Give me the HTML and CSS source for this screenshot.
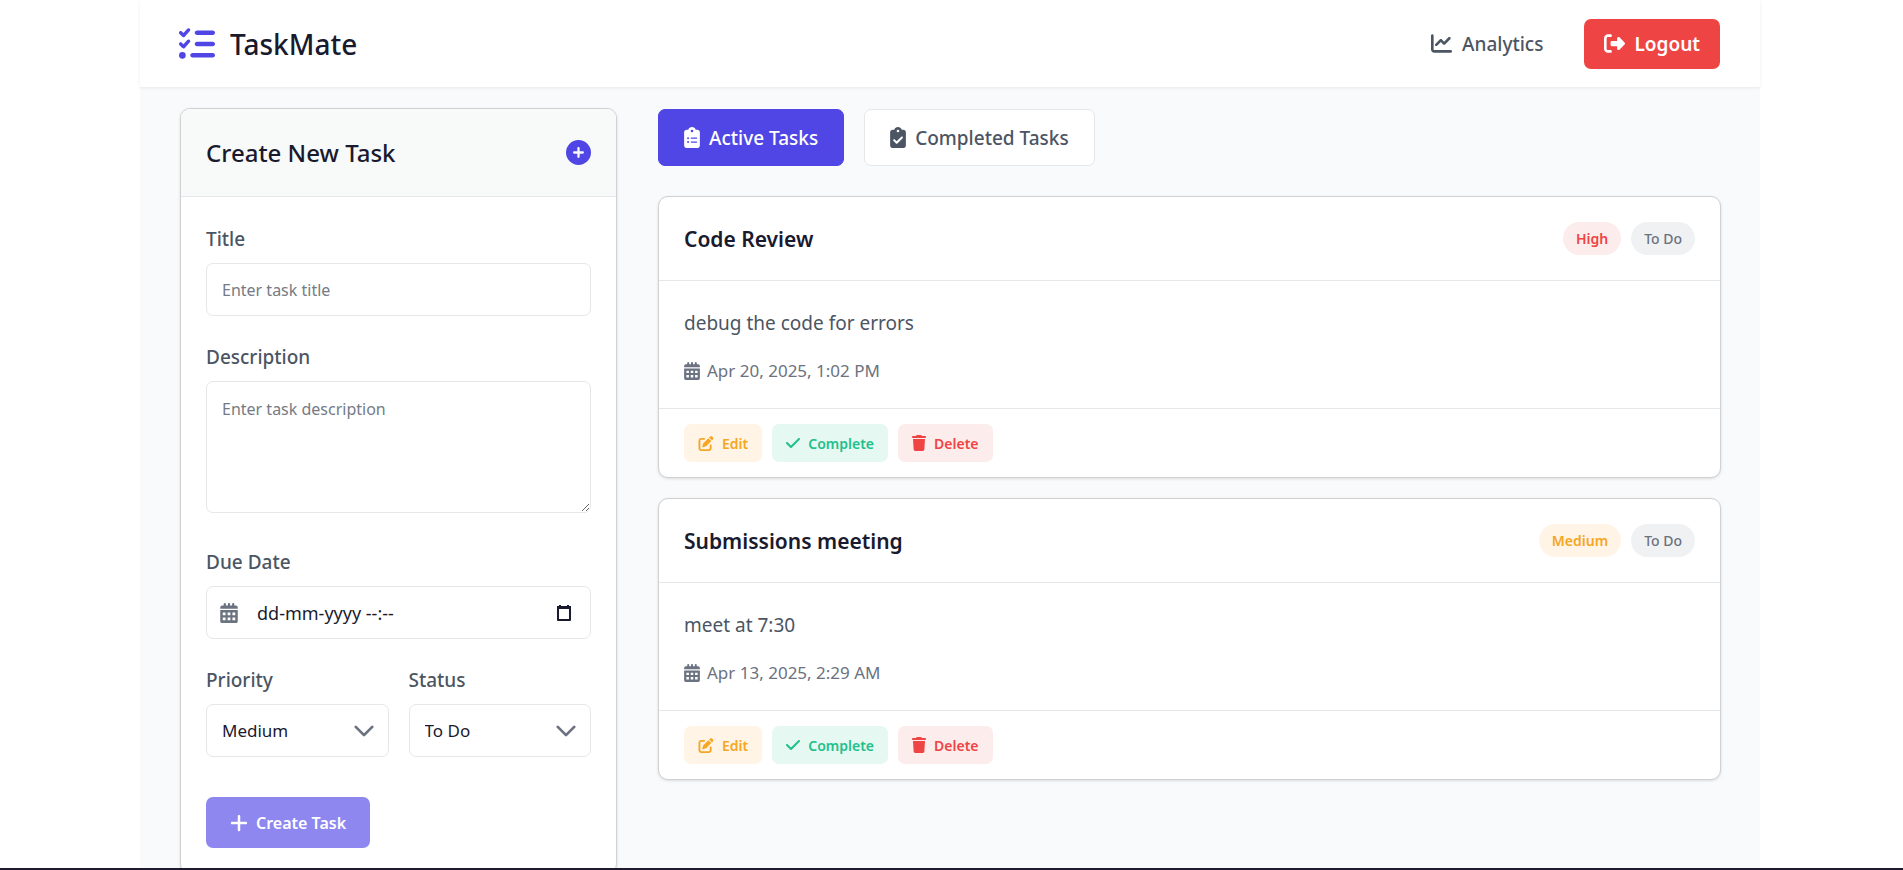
FILE: index.html
```html
<!DOCTYPE html>
<html lang="en">
<head>
<meta charset="utf-8">
<title>TaskMate</title>
<link rel="stylesheet" href="styles.css">
</head>
<body>
<svg class="sprite" aria-hidden="true">
  <symbol id="i-list" viewBox="0 0 512 512"><path d="M152.1 38.2c9.9 8.9 10.7 24 1.8 33.9l-72 80c-4.4 4.9-10.6 7.8-17.2 7.9s-12.9-2.4-17.6-7L7 113C-2.3 103.6-2.3 88.4 7 79s24.6-9.4 33.9 0l22.1 22.1 55.1-61.2c8.9-9.9 24-10.7 33.9-1.8zm0 160c9.9 8.9 10.7 24 1.8 33.9l-72 80c-4.4 4.9-10.6 7.8-17.2 7.9s-12.9-2.4-17.6-7L7 273c-9.4-9.4-9.4-24.6 0-33.9s24.6-9.4 33.9 0l22.1 22.1 55.1-61.2c8.9-9.9 24-10.7 33.9-1.8zM224 96c0-17.7 14.3-32 32-32l224 0c17.7 0 32 14.3 32 32s-14.3 32-32 32l-224 0c-17.7 0-32-14.3-32-32zm0 160c0-17.7 14.3-32 32-32l224 0c17.7 0 32 14.3 32 32s-14.3 32-32 32l-224 0c-17.7 0-32-14.3-32-32zM160 416c0-17.7 14.3-32 32-32l288 0c17.7 0 32 14.3 32 32s-14.3 32-32 32l-288 0c-17.7 0-32-14.3-32-32zM48 368a48 48 0 1 1 0 96 48 48 0 1 1 0-96z"/></symbol>
  <symbol id="i-chart" viewBox="0 0 512 512"><path d="M64 64c0-17.700-14.300-32-32-32S0 46.300 0 64L0 400c0 44.200 35.800 80 80 80l400 0c17.700 0 32-14.300 32-32s-14.300-32-32-32L80 416c-8.800 0-16-7.200-16-16L64 64zm406.600 86.600c12.500-12.500 12.500-32.800 0-45.300s-32.800-12.500-45.300 0L320 210.700l-57.400-57.400c-12.500-12.500-32.800-12.500-45.300 0l-112 112c-12.500 12.500-12.500 32.800 0 45.300s32.800 12.500 45.300 0L240 221.300l57.400 57.400c12.500 12.500 32.800 12.500 45.300 0l128-128z"/></symbol>
  <symbol id="i-logout" viewBox="0 0 512 512"><path d="M377.900 105.900L500.700 228.700c7.200 7.200 11.300 17.100 11.300 27.300s-4.100 20.100-11.300 27.300L377.900 406.100c-6.400 6.400-15 9.900-24 9.900c-18.700 0-33.900-15.200-33.900-33.900l0-62.100-128 0c-17.700 0-32-14.300-32-32l0-64c0-17.700 14.300-32 32-32l128 0 0-62.100c0-18.700 15.200-33.900 33.900-33.900c9 0 17.600 3.600 24 9.900zM160 96L96 96c-17.700 0-32 14.300-32 32l0 256c0 17.700 14.300 32 32 32l64 0c17.700 0 32 14.300 32 32s-14.300 32-32 32l-64 0c-53 0-96-43-96-96L0 128C0 75 43 32 96 32l64 0c17.700 0 32 14.300 32 32s-14.300 32-32 32z"/></symbol>
  <symbol id="i-plus-circle" viewBox="0 0 512 512"><path d="M256 512A256 256 0 1 0 256 0a256 256 0 1 0 0 512zM232 344l0-64-64 0c-13.300 0-24-10.700-24-24s10.700-24 24-24l64 0 0-64c0-13.300 10.700-24 24-24s24 10.700 24 24l0 64 64 0c13.300 0 24 10.700 24 24s-10.700 24-24 24l-64 0 0 64c0 13.300-10.700 24-24 24s-24-10.700-24-24z"/></symbol>
  <symbol id="i-calendar" viewBox="0 0 448 512"><path fill-rule="evenodd" d="M0 150h448v-38a48 48 0 0 0-48-48h-40V28a24 24 0 0 0-56 0v36h-52V28a24 24 0 0 0-56 0v36h-52V28a24 24 0 0 0-56 0v36H48a48 48 0 0 0-48 48zM0 182h448v282a48 48 0 0 1-48 48H48a48 48 0 0 1-48-48zM64 246v68h72v-68zM188 246v68h72v-68zM312 246v68h72v-68zM64 372v68h72v-68zM188 372v68h72v-68zM312 372v68h72v-68z"/></symbol>
  <symbol id="i-clip-list" viewBox="0 0 384 512"><path fill-rule="evenodd" d="M192 0c-41.800 0-77.400 26.700-90.500 64H64C28.700 64 0 92.700 0 128v320c0 35.300 28.700 64 64 64h256c35.300 0 64-28.700 64-64V128c0-35.300-28.700-64-64-64h-37.500C269.400 26.700 233.800 0 192 0zm0 64a32 32 0 1 1 0 64 32 32 0 1 1 0-64zM72 272a24 24 0 1 1 48 0 24 24 0 1 1-48 0zm104-16h128c8.800 0 16 7.200 16 16s-7.200 16-16 16H176c-8.800 0-16-7.200-16-16s7.200-16 16-16zM72 368a24 24 0 1 1 48 0 24 24 0 1 1-48 0zm88 0c0-8.800 7.200-16 16-16h128c8.800 0 16 7.200 16 16s-7.200 16-16 16H176c-8.800 0-16-7.200-16-16z"/></symbol>
  <symbol id="i-clip-check" viewBox="0 0 384 512"><path fill-rule="evenodd" d="M192 0c-41.800 0-77.400 26.700-90.500 64H64C28.700 64 0 92.700 0 128v320c0 35.300 28.700 64 64 64h256c35.300 0 64-28.700 64-64V128c0-35.300-28.700-64-64-64h-37.500C269.400 26.700 233.800 0 192 0zm0 64a32 32 0 1 1 0 64 32 32 0 1 1 0-64zM305 273L177 401c-9.400 9.400-24.600 9.400-33.900 0L79 337c-9.400-9.400-9.400-24.600 0-33.900s24.600-9.400 33.900 0l47 47L271 239c9.400-9.400 24.600-9.400 33.900 0s9.400 24.600 0 33.900z"/></symbol>
  <symbol id="i-edit" viewBox="0 0 512 512"><path d="M471.600 21.700c-21.900-21.900-57.300-21.900-79.200 0L362.300 51.700l97.900 97.900 30.100-30.100c21.900-21.900 21.900-57.300 0-79.200L471.600 21.700zm-299.200 220c-6.100 6.100-10.800 13.600-13.500 21.900l-29.600 88.800c-2.900 8.600-.6 18.100 5.800 24.600s15.900 8.700 24.600 5.800l88.800-29.600c8.200-2.700 15.700-7.400 21.900-13.500L437.700 172.300 339.700 74.300 172.400 241.700zM96 64C43 64 0 107 0 160v256c0 53 43 96 96 96h256c53 0 96-43 96-96v-96c0-17.700-14.300-32-32-32s-32 14.300-32 32v96c0 17.700-14.300 32-32 32H96c-17.700 0-32-14.300-32-32V160c0-17.700 14.300-32 32-32h96c17.700 0 32-14.300 32-32s-14.300-32-32-32H96z"/></symbol>
  <symbol id="i-check" viewBox="0 0 448 512"><path d="M438.600 105.400c12.500 12.500 12.500 32.800 0 45.300l-256 256c-12.500 12.500-32.800 12.500-45.300 0l-128-128c-12.500-12.500-12.500-32.800 0-45.300s32.800-12.500 45.300 0L160 338.700 393.400 105.400c12.500-12.500 32.800-12.500 45.300 0z"/></symbol>
  <symbol id="i-trash" viewBox="0 0 448 512"><path d="M135.200 17.700L128 32H32C14.300 32 0 46.300 0 64s14.300 32 32 32h384c17.700 0 32-14.300 32-32s-14.300-32-32-32h-96l-7.200-14.300C307.400 6.800 296.300 0 284.200 0H163.800c-12.100 0-23.200 6.800-28.600 17.700zM416 128H32l21.200 339c1.600 25.300 22.600 45 47.900 45h245.800c25.300 0 46.300-19.700 47.900-45L416 128z"/></symbol>
  <symbol id="i-plus" viewBox="0 0 448 512"><path d="M256 80c0-17.700-14.300-32-32-32s-32 14.300-32 32v144H48c-17.700 0-32 14.300-32 32s14.300 32 32 32h144v144c0 17.700 14.300 32 32 32s32-14.300 32-32V288h144c17.700 0 32-14.300 32-32s-14.300-32-32-32H256V80z"/></symbol>
  <symbol id="i-chevron" viewBox="0 0 16 16"><path fill="none" stroke="currentColor" stroke-width="2" stroke-linecap="round" stroke-linejoin="round" d="m2 5 6 6 6-6"/></symbol>
</svg>

<div class="app">
  <header class="topbar">
    <div class="brand">
      <svg class="icon brand-icon"><use href="#i-list"/></svg>
      <span class="brand-name">TaskMate</span>
    </div>
    <nav class="topnav">
      <a class="nav-link" href="#analytics"><svg class="icon icon-nav"><use href="#i-chart"/></svg>Analytics</a>
      <button class="logout" type="button"><svg class="icon icon-nav"><use href="#i-logout"/></svg>Logout</button>
    </nav>
  </header>

  <main class="content">
    <section class="card form-card">
      <div class="form-head">
        <h2 class="form-title">Create New Task</h2>
        <svg class="icon icon-add"><use href="#i-plus-circle"/></svg>
      </div>
      <form class="form-body">
        <div class="field">
          <label class="label" for="title">Title</label>
          <input class="control" id="title" type="text" placeholder="Enter task title">
        </div>
        <div class="field">
          <label class="label" for="description">Description</label>
          <textarea class="control control-area" id="description" placeholder="Enter task description"></textarea>
        </div>
        <div class="field">
          <label class="label" for="due">Due Date</label>
          <div class="control date-control">
            <svg class="icon icon-date"><use href="#i-calendar"/></svg>
            <input class="date-input" id="due" type="text" value="dd-mm-yyyy --:--">
            <svg class="picker" viewBox="0 0 16 18"><path fill="none" stroke="currentColor" stroke-width="2" stroke-linejoin="round" d="M2 3h12v13H2z"/><path fill="currentColor" d="M1 2h14v3H1zM3 1h2v2H3zM11 1h2v2h-2z"/></svg>
          </div>
        </div>
        <div class="field-row">
          <div class="field">
            <label class="label" for="priority">Priority</label>
            <div class="select-wrap">
              <select class="control" id="priority"><option>Low</option><option selected>Medium</option><option>High</option></select>
              <svg class="chevron"><use href="#i-chevron"/></svg>
            </div>
          </div>
          <div class="field">
            <label class="label" for="status">Status</label>
            <div class="select-wrap">
              <select class="control" id="status"><option>To Do</option><option>In Progress</option></select>
              <svg class="chevron"><use href="#i-chevron"/></svg>
            </div>
          </div>
        </div>
        <button class="create" type="button"><svg class="icon icon-create"><use href="#i-plus"/></svg>Create Task</button>
      </form>
    </section>

    <section class="tasks">
      <div class="tabs">
        <button class="tab tab-active" type="button"><svg class="icon icon-tab"><use href="#i-clip-list"/></svg>Active Tasks</button>
        <button class="tab" type="button"><svg class="icon icon-tab"><use href="#i-clip-check"/></svg>Completed Tasks</button>
      </div>

      <article class="card task">
        <div class="task-head">
          <h3 class="task-title">Code Review</h3>
          <div class="badges"><span class="badge badge-high">High</span><span class="badge badge-todo">To Do</span></div>
        </div>
        <div class="task-body">
          <p class="task-text">debug the code for errors</p>
          <div class="task-date"><svg class="icon icon-meta"><use href="#i-calendar"/></svg>Apr 20, 2025, 1:02 PM</div>
        </div>
        <div class="task-actions">
          <button class="action action-edit" type="button"><svg class="icon icon-edit"><use href="#i-edit"/></svg>Edit</button>
          <button class="action action-done" type="button"><svg class="icon icon-action"><use href="#i-check"/></svg>Complete</button>
          <button class="action action-delete" type="button"><svg class="icon icon-action"><use href="#i-trash"/></svg>Delete</button>
        </div>
      </article>

      <article class="card task">
        <div class="task-head">
          <h3 class="task-title">Submissions meeting</h3>
          <div class="badges"><span class="badge badge-medium">Medium</span><span class="badge badge-todo">To Do</span></div>
        </div>
        <div class="task-body">
          <p class="task-text">meet at 7:30</p>
          <div class="task-date"><svg class="icon icon-meta"><use href="#i-calendar"/></svg>Apr 13, 2025, 2:29 AM</div>
        </div>
        <div class="task-actions">
          <button class="action action-edit" type="button"><svg class="icon icon-edit"><use href="#i-edit"/></svg>Edit</button>
          <button class="action action-done" type="button"><svg class="icon icon-action"><use href="#i-check"/></svg>Complete</button>
          <button class="action action-delete" type="button"><svg class="icon icon-action"><use href="#i-trash"/></svg>Delete</button>
        </div>
      </article>
    </section>
  </main>
</div>
<div class="bottom-edge"></div>
</body>
</html>
```
FILE: styles.css
```css
:root {
  --ink: #1a1a2e;
  --label: #4b5563;
  --muted: #6b7280;
  --line: #e5e7eb;
  --primary: #4f46e5;
  --danger: #ef4444;
  --warn: #f5a623;
  --ok: #22c08b;
}

*, *::before, *::after { box-sizing: border-box; }

body {
  margin: 0;
  padding-right: 3px;
  background: #fff;
  color: var(--ink);
  font-family: "Noto Sans", "Open Sans", sans-serif;
  font-size: 18px;
  overflow: hidden;
}

h2, h3, p { margin: 0; }
button, input, select, textarea { font-family: inherit; }
button { border: 0; cursor: pointer; }

.sprite { display: none; }
.icon { flex: none; fill: currentColor; }

.app {
  max-width: 1620px;
  min-height: 100vh;
  margin: 0 auto;
  background: #f9fafb;
}

.topbar {
  display: flex;
  align-items: center;
  justify-content: space-between;
  height: 87px;
  padding: 0 40px 0 39px;
  background: #fff;
  box-shadow: 0 1px 3px rgba(0, 0, 0, 0.08);
}

.brand { display: flex; align-items: center; gap: 15px; }
.brand-icon { width: 36px; height: 36px; color: var(--primary); }
.brand-name { font-size: 28px; font-weight: 500; }

.topnav { display: flex; align-items: center; gap: 41px; }
.nav-link {
  display: flex;
  align-items: center;
  gap: 10px;
  color: var(--label);
  font-size: 19px;
  font-weight: 500;
  text-decoration: none;
}
.icon-nav { width: 21px; height: 21px; }
.logout {
  display: flex;
  align-items: center;
  gap: 9px;
  height: 50px;
  padding: 0 20px;
  border-radius: 7px;
  background: var(--danger);
  color: #fff;
  font-size: 19px;
  font-weight: 600;
}

.content {
  display: grid;
  grid-template-columns: 437px 1fr;
  align-items: start;
  gap: 41px;
  padding: 21px 39px 0 40px;
}

.card {
  border: 1px solid #d1d1d1;
  border-radius: 10px;
  background: #fff;
  box-shadow: 0 1px 3px rgba(0, 0, 0, 0.12);
  overflow: hidden;
}

.form-head {
  display: flex;
  align-items: center;
  justify-content: space-between;
  height: 88px;
  padding: 0 25px;
  border-bottom: 1px solid var(--line);
  background: #f8faf9;
}
.form-title { font-size: 24px; font-weight: 500; }
.icon-add { width: 25px; height: 25px; color: var(--primary); }

.form-body { display: flex; flex-direction: column; gap: 27px; padding: 28px 25px 25px; }
.field { display: flex; flex: 1; flex-direction: column; gap: 10px; min-width: 0; }
.field-row { display: flex; gap: 20px; margin-bottom: 13px; }
.label { color: var(--label); font-size: 19px; font-weight: 500; line-height: 28px; }

.control {
  width: 100%;
  height: 53px;
  padding: 0 15px;
  border: 1px solid var(--line);
  border-radius: 7px;
  background: #fff;
  color: var(--ink);
  font-size: 17px;
}
.control::placeholder { color: #757b85; font-size: 16px; }
.control-area { display: block; height: 132px; padding: 13px 15px; line-height: 28px; resize: vertical; margin-bottom: 8px; }

.date-control { display: flex; align-items: center; padding: 0 15px 0 13px; }
.icon-date { width: 18px; height: 20px; color: var(--muted); }
.date-input { flex: 1; min-width: 0; padding: 0 19px; border: 0; background: none; color: var(--ink); font-size: 18px; }
.picker { width: 16px; height: 18px; margin-right: 3px; }

.select-wrap { display: grid; align-items: center; }
.select-wrap > * { grid-area: 1 / 1; }
.select-wrap select { appearance: none; }
.chevron { justify-self: end; width: 22px; height: 22px; margin-right: 14px; color: var(--muted); pointer-events: none; }

.create {
  display: flex;
  align-items: center;
  align-self: flex-start;
  gap: 8px;
  height: 51px;
  padding: 0 24px;
  border-radius: 7px;
  background: #8d87ef;
  color: #fff;
  font-size: 16px;
  font-weight: 600;
}
.icon-create { width: 18px; height: 20px; }

.tasks { display: flex; flex-direction: column; gap: 20px; min-width: 0; }
.tabs { display: flex; gap: 20px; padding-top: 1px; margin-bottom: 10px; }
.tab {
  display: flex;
  align-items: center;
  gap: 9px;
  height: 57px;
  padding: 0 25px;
  border: 1px solid var(--line);
  border-radius: 7px;
  background: #fff;
  color: var(--label);
  font-size: 19px;
  font-weight: 500;
}
.tab-active { border-color: var(--primary); background: var(--primary); color: #fff; }
.icon-tab { width: 16px; height: 21px; }

.task-head {
  display: flex;
  align-items: center;
  justify-content: space-between;
  height: 84px;
  padding: 0 25px;
  border-bottom: 1px solid var(--line);
}
.task-title { font-size: 21px; font-weight: 600; }
.badges { display: flex; gap: 10px; }
.badge { padding: 0 13px; border-radius: 17px; font-size: 14px; font-weight: 600; line-height: 33px; }
.badge-high { background: #fdecec; color: var(--danger); }
.badge-medium { background: #fff4e6; color: var(--warn); }
.badge-todo { background: #f0f1f2; color: var(--muted); font-weight: 500; }

.task-body { display: flex; flex-direction: column; gap: 17px; padding: 26px 25px 23px; }
.task-text { color: var(--label); font-size: 19px; line-height: 32px; }
.task-date { display: flex; align-items: center; gap: 7px; color: var(--muted); font-size: 17px; line-height: 29px; }
.icon-meta { width: 16px; height: 18px; }

.task-actions { display: flex; gap: 10px; padding: 15px 25px; border-top: 1px solid var(--line); }
.action {
  display: flex;
  align-items: center;
  gap: 8px;
  height: 38px;
  padding: 0 14px;
  border-radius: 7px;
  font-size: 14px;
  font-weight: 600;
}
.icon-edit { width: 16px; height: 15px; }
.icon-action { width: 14px; height: 16px; }
.action-edit { background: #fff4e6; color: var(--warn); }
.action-done { background: #e6f8f2; color: var(--ok); }
.action-delete { background: #fdecec; color: var(--danger); }

.bottom-edge { position: fixed; right: 0; bottom: 0; left: 0; height: 2px; background: #1f1a2e; }
```
